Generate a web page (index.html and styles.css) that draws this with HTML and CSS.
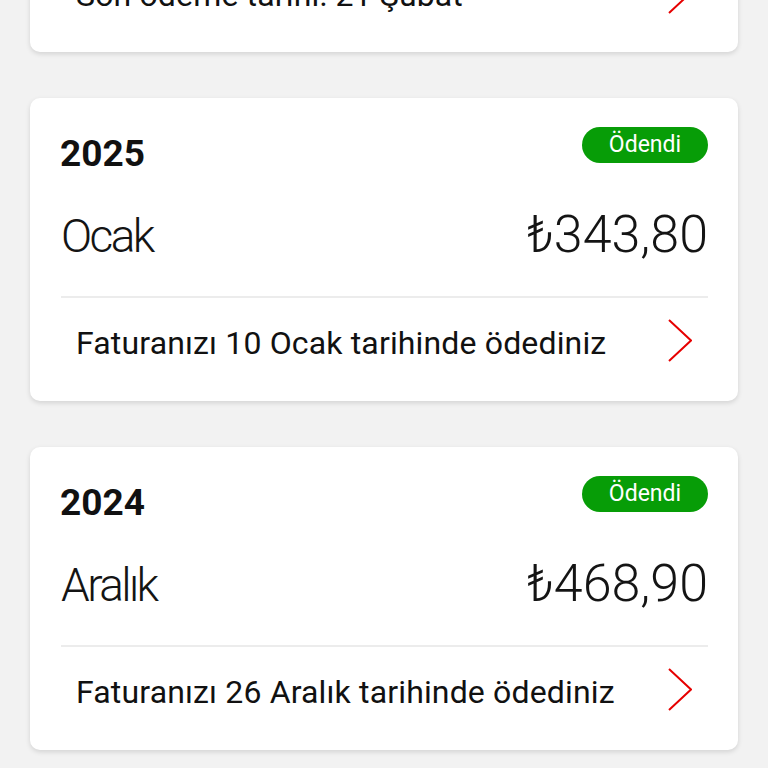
FILE: index.html
```html
<!DOCTYPE html>
<html lang="tr">
<head>
<meta charset="utf-8">
<title>Faturalar</title>
<link rel="stylesheet" href="styles.css">
</head>
<body>
<main class="list">
  <section class="card card-partial">
    <div class="footer">
      <span class="footer-text">Son ödeme tarihi: 21 Şubat</span>
      <svg class="chev" viewBox="0 0 24 43" width="24" height="43"><polyline points="1,1 23,21.5 1,42" fill="none" stroke="#e60000" stroke-width="2"/></svg>
    </div>
  </section>

  <section class="card">
    <div class="head">
      <span class="year">2025</span>
      <span class="badge">Ödendi</span>
    </div>
    <div class="amount-row">
      <span class="month">Ocak</span>
      <span class="amount">₺343,80</span>
    </div>
    <div class="divider"></div>
    <div class="footer">
      <span class="footer-text">Faturanızı 10 Ocak tarihinde ödediniz</span>
      <svg class="chev" viewBox="0 0 24 43" width="24" height="43"><polyline points="1,1 23,21.5 1,42" fill="none" stroke="#e60000" stroke-width="2"/></svg>
    </div>
  </section>

  <section class="card">
    <div class="head">
      <span class="year">2024</span>
      <span class="badge">Ödendi</span>
    </div>
    <div class="amount-row">
      <span class="month">Aralık</span>
      <span class="amount">₺468,90</span>
    </div>
    <div class="divider"></div>
    <div class="footer">
      <span class="footer-text">Faturanızı 26 Aralık tarihinde ödediniz</span>
      <svg class="chev" viewBox="0 0 24 43" width="24" height="43"><polyline points="1,1 23,21.5 1,42" fill="none" stroke="#e60000" stroke-width="2"/></svg>
    </div>
  </section>
</main>
</body>
</html>
```
FILE: styles.css
```css
html, body {
  margin: 0;
  padding: 0;
  background: #f2f2f2;
  overflow: hidden;
}
body {
  font-family: Roboto, "Liberation Sans", sans-serif;
  color: #141414;
  height: 768px;
}
.list {
  display: flex;
  flex-direction: column;
  gap: 46px;
  padding: 0 30px;
  margin-top: -251px;
}
.card {
  box-sizing: border-box;
  height: 303px;
  background: #fff;
  border-radius: 10px;
  box-shadow: 0 2px 5px rgba(0, 0, 0, 0.13);
  padding: 29px 30px 0 31px;
  display: flex;
  flex-direction: column;
}
.card-partial {
  justify-content: flex-end;
  padding-bottom: 38px;
}
.head {
  display: flex;
  justify-content: space-between;
  align-items: flex-start;
}
.year {
  font-size: 37px;
  font-weight: 700;
  line-height: 37px;
  margin-top: 8px;
  margin-left: -1px;
  color: #111;
}
.badge {
  box-sizing: border-box;
  height: 36px;
  width: 126px;
  border-radius: 18px;
  background: #079d07;
  color: #fff;
  font-size: 23px;
  line-height: 36px;
  text-align: center;
}
.amount-row {
  display: flex;
  justify-content: space-between;
  align-items: baseline;
  margin-top: 36px;
}
.month {
  font-size: 46px;
  font-weight: 300;
  line-height: 46px;
  letter-spacing: -2.6px;
}
.amount {
  font-size: 52px;
  font-weight: 300;
  line-height: 53px;
}
.divider {
  height: 2px;
  background: #ececec;
  margin-top: 35px;
}
.footer {
  display: flex;
  justify-content: space-between;
  align-items: flex-start;
  margin-top: 21px;
  padding: 0 16px 0 15px;
}
.footer-text {
  font-size: 32px;
  line-height: 32px;
  letter-spacing: 0.15px;
  margin-top: 8px;
  color: #111;
}
.chev {
  display: block;
  flex: none;
}
```
